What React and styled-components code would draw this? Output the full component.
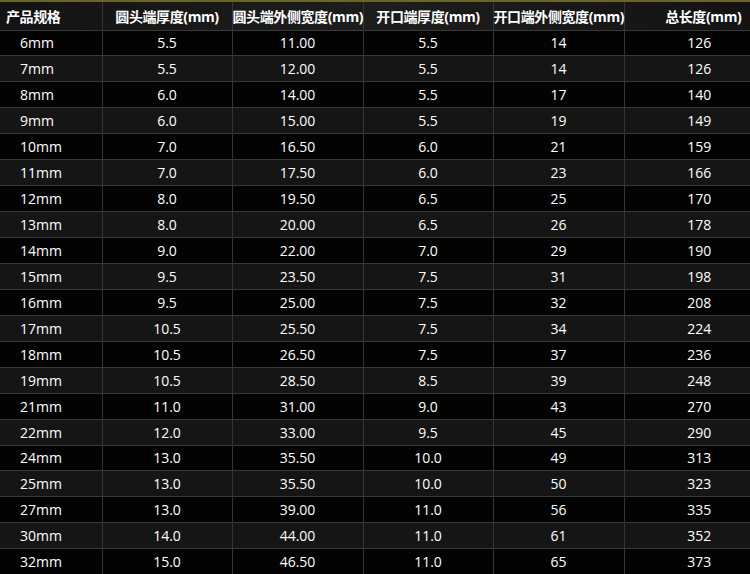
import React from "react";
import styled, { createGlobalStyle } from "styled-components";

const Global = createGlobalStyle`
  html, body { margin: 0; padding: 0; background: #000; }
  body { font-family: "Open Sans", "Noto Sans CJK SC", sans-serif; }
`;

const Page = styled.div`
  width: 750px;
  height: 574px;
  overflow: hidden;
  background: #000;
  border-top: 2px solid #6a671c;
`;

const Table = styled.table`
  width: 750px;
  border-collapse: collapse;
  table-layout: fixed;
  color: #fff;
`;

const Col = styled.col`
  width: ${(p) => p.$w}px;
`;

const HeadRow = styled.tr`
  height: 28px;
  background: linear-gradient(90deg, #131313 0%, #1d1d1d 50%, #131313 100%);
  border-bottom: 1px solid #3a3a3a;
`;

const Row = styled.tr`
  height: 25.95px;
  background: ${(p) => (p.$alt ? "#151515" : "#030303")};
  border-bottom: 1px solid #383838;
`;

const Th = styled.th`
  padding: 0;
  padding-left: ${(p) => p.$pl || 0}px;
  text-align: ${(p) => p.$align || "center"};
  font-size: 14px;
  font-weight: 700;
  letter-spacing: -0.4px;
  white-space: nowrap;
  border-left: ${(p) => (p.$first ? "none" : "1px solid #343434")};
`;

const Td = styled.td`
  padding: 0;
  padding-left: ${(p) => p.$pl || 0}px;
  text-align: ${(p) => p.$align || "center"};
  font-size: 14px;
  font-weight: 500;
  white-space: nowrap;
  border-left: ${(p) => (p.$first ? "none" : "1px solid #343434")};
`;

const widths = [102, 130, 131, 130, 131, 126];

const headers = [
  "产品规格",
  "圆头端厚度(mm)",
  "圆头端外侧宽度(mm)",
  "开口端厚度(mm)",
  "开口端外侧宽度(mm)",
  "总长度(mm)",
];

const rows = [
  ["6mm", "5.5", "11.00", "5.5", "14", "126"],
  ["7mm", "5.5", "12.00", "5.5", "14", "126"],
  ["8mm", "6.0", "14.00", "5.5", "17", "140"],
  ["9mm", "6.0", "15.00", "5.5", "19", "149"],
  ["10mm", "7.0", "16.50", "6.0", "21", "159"],
  ["11mm", "7.0", "17.50", "6.0", "23", "166"],
  ["12mm", "8.0", "19.50", "6.5", "25", "170"],
  ["13mm", "8.0", "20.00", "6.5", "26", "178"],
  ["14mm", "9.0", "22.00", "7.0", "29", "190"],
  ["15mm", "9.5", "23.50", "7.5", "31", "198"],
  ["16mm", "9.5", "25.00", "7.5", "32", "208"],
  ["17mm", "10.5", "25.50", "7.5", "34", "224"],
  ["18mm", "10.5", "26.50", "7.5", "37", "236"],
  ["19mm", "10.5", "28.50", "8.5", "39", "248"],
  ["21mm", "11.0", "31.00", "9.0", "43", "270"],
  ["22mm", "12.0", "33.00", "9.5", "45", "290"],
  ["24mm", "13.0", "35.50", "10.0", "49", "313"],
  ["25mm", "13.0", "35.50", "10.0", "50", "323"],
  ["27mm", "13.0", "39.00", "11.0", "56", "335"],
  ["30mm", "14.0", "44.00", "11.0", "61", "352"],
  ["32mm", "15.0", "46.50", "11.0", "65", "373"],
];

const headPad = [6, 0, 0, 0, 0, 32];
const dataPad = [20, 0, 0, 0, 0, 24];

export default function App() {
  return (
    <>
      <Global />
      <Page>
        <Table>
          <colgroup>
            {widths.map((w, i) => (
              <Col key={i} $w={w} />
            ))}
          </colgroup>
          <thead>
            <HeadRow>
              {headers.map((h, i) => (
                <Th
                  key={h}
                  $first={i === 0}
                  $align={i === 0 ? "left" : "center"}
                  $pl={headPad[i]}
                >
                  {h}
                </Th>
              ))}
            </HeadRow>
          </thead>
          <tbody>
            {rows.map((r, ri) => (
              <Row key={r[0]} $alt={ri % 2 === 1}>
                {r.map((c, i) => (
                  <Td
                    key={i}
                    $first={i === 0}
                    $align={i === 0 ? "left" : "center"}
                    $pl={dataPad[i]}
                  >
                    {c}
                  </Td>
                ))}
              </Row>
            ))}
          </tbody>
        </Table>
      </Page>
    </>
  );
}
